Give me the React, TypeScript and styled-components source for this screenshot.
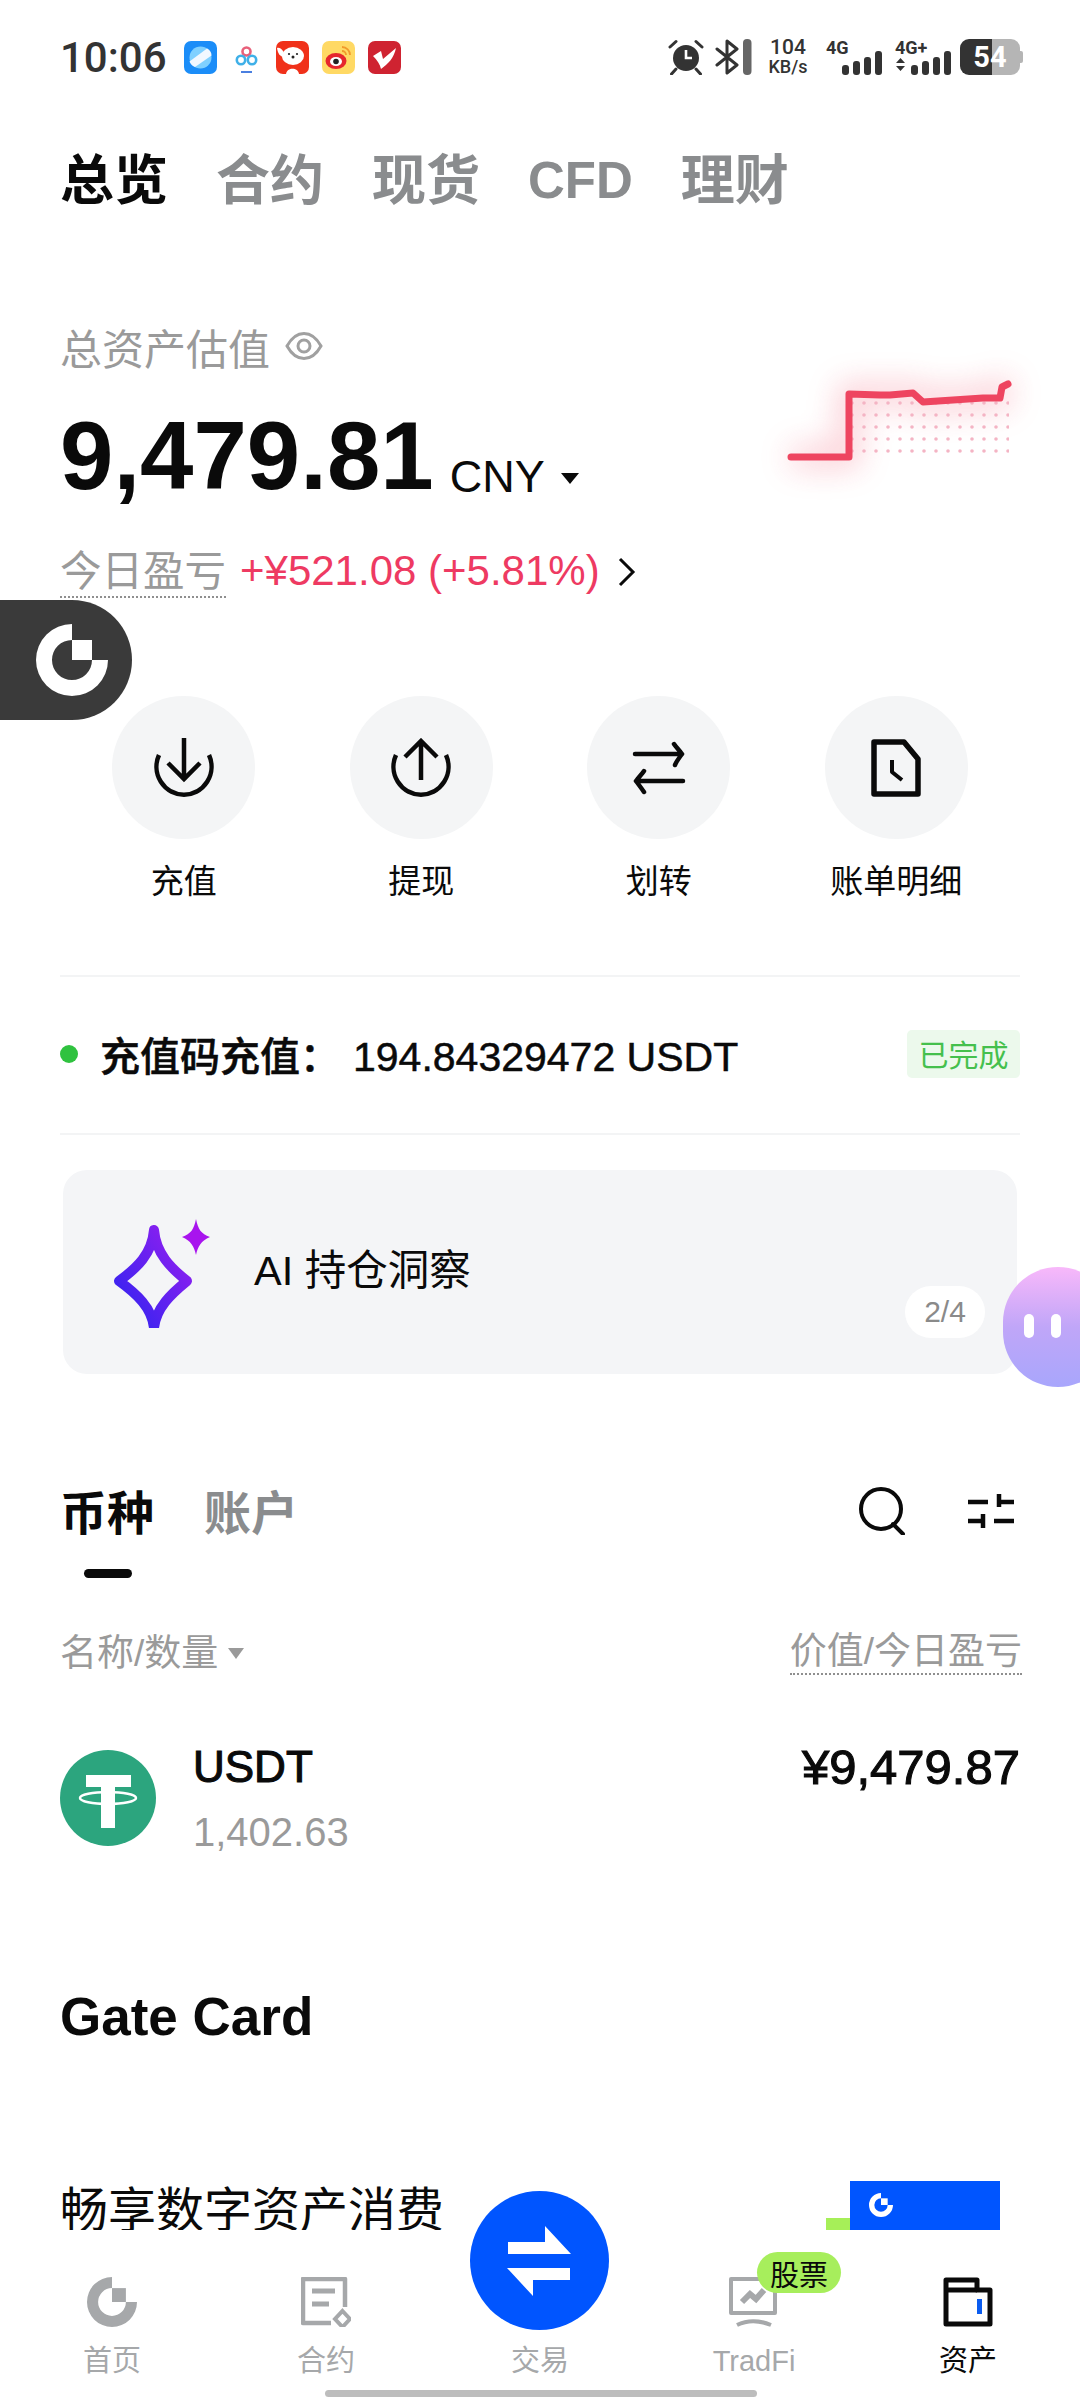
import React from "react";
import styled, { createGlobalStyle } from "styled-components";

const sans = `"Liberation Sans", "Noto Sans CJK SC", sans-serif`;

const GlobalStyle = createGlobalStyle`
  html, body {
    margin: 0;
    padding: 0;
    background: #ffffff;
  }
`;

const Page = styled.div`
  position: relative;
  width: 1080px;
  height: 2400px;
  overflow: hidden;
  background: #ffffff;
  color: #0a0a0a;
  font-family: ${sans};
`;

const Content = styled.div`
  display: flex;
  flex-direction: column;
  padding: 0 60px;
`;

/* status bar */
const StatusBar = styled.div`
  display: flex;
  align-items: center;
  justify-content: space-between;
  height: 114px;
  margin: 0 -60px;
  padding: 0 60px;
`;

const StatusLeft = styled.div`
  display: flex;
  align-items: center;
`;

const Clock = styled.div`
  width: 124px;
  font-family: Roboto, sans-serif;
  font-size: 42px;
  font-weight: 500;
  color: #333333;
`;

const AppIcons = styled.div`
  display: flex;
  gap: 13px;
`;

const StatusRight = styled.div`
  display: flex;
  align-items: center;
`;

const Speed = styled.div`
  display: flex;
  flex-direction: column;
  align-items: center;
  width: 44px;
  margin: 0 16px 0 14px;
  font-family: Roboto, sans-serif;
  font-weight: 500;
  color: #333333;
`;

const SpeedValue = styled.span`
  font-size: 21px;
  line-height: 20px;
`;

const SpeedUnit = styled.span`
  font-size: 18px;
  line-height: 20px;
`;

const Signal = styled.div<{ $gap: number }>`
  position: relative;
  width: 56px;
  height: 36px;
  margin-right: ${(p) => p.$gap}px;
`;

const SignalLabel = styled.span`
  position: absolute;
  left: 0;
  top: 0;
  font-family: Roboto, sans-serif;
  font-size: 18px;
  font-weight: 700;
  line-height: 18px;
  color: #333333;
`;

const Battery = styled.div`
  position: relative;
  display: flex;
  align-items: center;
  justify-content: center;
  width: 60px;
  height: 36px;
  border-radius: 9px;
  background: linear-gradient(90deg, #333333 0 53%, #b5b5b5 53% 100%);
  font-family: Roboto, sans-serif;
  font-size: 29px;
  font-weight: 700;
  color: #ffffff;
  &::after {
    content: "";
    position: absolute;
    right: -3px;
    top: 12px;
    width: 3px;
    height: 12px;
    border-radius: 0 2px 2px 0;
    background: #b5b5b5;
  }
`;

/* top tabs */
const TopTabs = styled.div`
  display: flex;
  gap: 48px;
  height: 60px;
  margin-top: 37px;
  align-items: center;
`;

const TopTab = styled.span<{ $active?: boolean; $latin?: boolean }>`
  font-size: ${(p) => (p.$latin ? 51 : 54)}px;
  font-weight: 700;
  line-height: 60px;
  color: ${(p) => (p.$active ? "#0a0a0a" : "#8a8c8e")};
`;

/* balance */
const BalanceLabel = styled.div`
  display: flex;
  align-items: center;
  gap: 15px;
  height: 50px;
  margin-top: 110px;
  font-size: 42px;
  color: #9a9a9a;
`;

const BalanceRow = styled.div`
  display: flex;
  align-items: baseline;
  height: 100px;
  margin-top: 35px;
`;

const Amount = styled.span`
  font-size: 96px;
  font-weight: 700;
  line-height: 100px;
`;

const Currency = styled.span`
  margin-left: 16px;
  font-size: 45px;
  transform: translateY(3px);
`;

const Caret = styled.span`
  align-self: center;
  width: 0;
  height: 0;
  margin: 44px 0 0 16px;
  border-left: 9px solid transparent;
  border-right: 9px solid transparent;
  border-top: 11px solid #0a0a0a;
`;

const ChartBox = styled.div`
  position: absolute;
  left: 760px;
  top: 350px;
`;

const DailyRow = styled.div`
  display: flex;
  align-items: center;
  height: 50px;
  margin-top: 41px;
`;

const DailyLabel = styled.span`
  height: 50px;
  border-bottom: 2px dotted #8f8f8f;
  font-size: 41.5px;
  line-height: 52px;
  color: #9a9a9a;
`;

const DailyValue = styled.span`
  margin: -2px 0 0 14px;
  font-size: 42px;
  color: #ee3a62;
`;

const DailyArrow = styled.svg`
  margin-left: 17px;
`;

/* floating pills */
const GatePill = styled.div`
  position: absolute;
  left: 0;
  top: 600px;
  display: flex;
  align-items: center;
  padding-left: 36px;
  box-sizing: border-box;
  width: 132px;
  height: 120px;
  border-radius: 0 60px 60px 0;
  background: #3a3a3a;
`;

const BotPill = styled.div`
  position: absolute;
  left: 1003px;
  top: 1267px;
  display: flex;
  align-items: center;
  gap: 17px;
  box-sizing: border-box;
  width: 110px;
  height: 120px;
  padding: 0 0 0 21px;
  border-radius: 60px;
  background: linear-gradient(180deg, #f8b8fa 0%, #c0a6f8 50%, #a8a6fc 100%);
`;

const BotEye = styled.span`
  width: 10px;
  height: 24px;
  margin-top: -2px;
  border-radius: 5px;
  background: #ffffff;
`;

/* actions */
const Actions = styled.div`
  display: grid;
  grid-template-columns: repeat(4, 237.5px);
  margin-top: 99px;
  padding-left: 5px;
`;

const Action = styled.div`
  display: flex;
  flex-direction: column;
  align-items: center;
  gap: 23px;
`;

const ActionCircle = styled.div`
  display: flex;
  align-items: center;
  justify-content: center;
  width: 143px;
  height: 143px;
  border-radius: 50%;
  background: #f4f5f6;
`;

const ActionLabel = styled.span`
  font-size: 33px;
  line-height: 40px;
`;

const Divider = styled.div<{ $top: number }>`
  height: 2px;
  margin-top: ${(p) => p.$top}px;
  background: #f3f4f5;
`;

/* notice */
const Notice = styled.div`
  display: flex;
  align-items: center;
  height: 48px;
  margin-top: 53px;
`;

const NoticeDot = styled.span`
  width: 18px;
  height: 18px;
  border-radius: 50%;
  background: #2fc23f;
`;

const NoticeText = styled.span`
  flex: 1;
  margin-left: 22px;
  font-size: 40px;
  font-weight: 500;
  -webkit-text-stroke: 0.5px #0a0a0a;
`;

const NoticeValue = styled.span`
  margin-left: 13px;
  font-size: 41px;
  font-weight: 400;
`;

const StatusBadge = styled.span`
  display: flex;
  align-items: center;
  justify-content: center;
  width: 113px;
  height: 48px;
  padding-bottom: 2px;
  box-sizing: border-box;
  border-radius: 5px;
  background: #ecf9ec;
  font-size: 30px;
  color: #45c04d;
`;

/* AI card */
const InsightCard = styled.div`
  position: relative;
  display: flex;
  align-items: center;
  height: 204px;
  margin: 35px 3px 0;
  padding-left: 50px;
  border-radius: 24px;
  background: #f4f5f7;
`;

const InsightText = styled.span`
  margin: 0 0 10px 41px;
  font-size: 41.500px;
`;

const Pager = styled.span`
  position: absolute;
  right: 32px;
  bottom: 36px;
  display: flex;
  align-items: center;
  justify-content: center;
  width: 80px;
  height: 52px;
  border-radius: 26px;
  background: #ffffff;
  font-size: 30px;
  color: #8a8a8a;
`;

/* assets */
const AssetTabs = styled.div`
  display: flex;
  align-items: center;
  height: 60px;
  margin-top: 105px;
`;

const AssetTab = styled.span<{ $active?: boolean }>`
  margin-right: 50px;
  font-size: 47px;
  font-weight: 700;
  color: ${(p) => (p.$active ? "#0a0a0a" : "#8a8c8e")};
`;

const AssetTools = styled.div`
  display: flex;
  align-items: center;
  gap: 63px;
  margin: 3px 6px 0 auto;
`;

const TabMarker = styled.div`
  width: 48px;
  height: 9px;
  margin: 30px 0 0 24px;
  border-radius: 5px;
  background: #0a0a0a;
`;

const ListHeader = styled.div`
  display: flex;
  align-items: center;
  height: 46px;
  margin-top: 51px;
  font-size: 37px;
  color: #9a9a9a;
`;

const SmallCaret = styled.span`
  width: 0;
  height: 0;
  margin: 2px 0 0 10px;
  border-left: 8px solid transparent;
  border-right: 8px solid transparent;
  border-top: 11px solid #9a9a9a;
`;

const NameHeader = styled.span`
  margin-top: -4px;
`;

const ValueHeader = styled.span`
  margin: 0 -2px 0 auto;
  border-bottom: 2px dotted #8f8f8f;
  line-height: 43px;
`;

const CoinRow = styled.div`
  display: flex;
  height: 96px;
  margin-top: 75px;
`;

const CoinInfo = styled.div`
  flex: 1;
  display: flex;
  flex-direction: column;
  margin-left: 37px;
`;

const CoinName = styled.span`
  height: 40px;
  font-size: 44px;
  line-height: 34px;
  -webkit-text-stroke: 1.1px #0a0a0a;
`;

const CoinAmount = styled.span`
  margin-top: 26px;
  font-size: 40px;
  line-height: 44px;
  color: #9a9a9a;
`;

const CoinValue = styled.span`
  font-size: 49px;
  line-height: 34px;
  -webkit-text-stroke: 1.1px #0a0a0a;
`;

const SectionTitle = styled.div`
  height: 64px;
  margin-top: 139px;
  font-size: 53px;
  font-weight: 700;
  line-height: 64px;
`;

const Promo = styled.div`
  display: flex;
  align-items: flex-start;
  height: 120px;
  margin-top: 129px;
`;

const PromoText = styled.span`
  flex: 1;
  margin-top: 3px;
  font-size: 48px;
  line-height: 60px;
`;

const PromoLime = styled.div`
  width: 24px;
  height: 60px;
  margin-top: 40px;
  background: #a6ef58;
`;

const PromoCard = styled.div`
  display: flex;
  width: 150px;
  height: 100px;
  margin: 3px 20px 0 0;
  padding: 12px 0 0 19px;
  box-sizing: border-box;
  background: #0055ff;
`;

/* bottom nav */
const BottomNav = styled.nav`
  position: absolute;
  left: 0;
  right: 0;
  bottom: 0;
  display: grid;
  grid-template-columns: repeat(5, 214px);
  box-sizing: border-box;
  height: 170px;
  padding: 47px 5px 0;
  background: #ffffff;
`;

const NavItem = styled.div<{ $active?: boolean }>`
  position: relative;
  display: flex;
  flex-direction: column;
  align-items: center;
  font-size: 29px;
  color: ${(p) => (p.$active ? "#0a0a0a" : "#a6a8aa")};
`;

const NavIconSlot = styled.div`
  height: 50px;
  margin-bottom: 16px;
`;

const NavLabel = styled.span`
  line-height: 36px;
`;

const TradeButton = styled.div`
  position: absolute;
  left: 37px;
  top: -86px;
  display: flex;
  align-items: center;
  justify-content: center;
  width: 139px;
  height: 139px;
  border-radius: 50%;
  background: #0055ff;
`;

const StockBadge = styled.span`
  position: absolute;
  left: 110px;
  top: -25px;
  display: flex;
  align-items: center;
  justify-content: center;
  width: 84px;
  height: 41px;
  border-radius: 21px;
  background: #a7ee5c;
  font-size: 29px;
  color: #0a0a0a;
`;

const HomeBar = styled.div`
  position: absolute;
  left: 325px;
  bottom: 3px;
  width: 432px;
  height: 7px;
  border-radius: 4px;
  background: #bdbdbd;
`;

function GateLogo({ size, color }: { size: number; color: string }) {
  return (
    <svg width={size} height={size} viewBox="-36 -36 72 72">
      <path d="M0 -36A36 36 0 1 0 36 0H20A20 20 0 1 1 0 -20Z" fill={color} />
      <rect x="0" y="-20" width="20" height="20" fill={color} />
    </svg>
  );
}

function AppIconSet() {
  return (
    <AppIcons>
      <svg width="33" height="33" viewBox="0 0 33 33">
        <rect width="33" height="33" rx="7" fill="#1b8df8" />
        <circle cx="16.5" cy="16.5" r="11" fill="#7fd0ff" />
        <path d="M5.5 20.5L23 7.5C26 9 27.5 11.5 27.5 14.5L11 26C8 25 6.5 23 5.5 20.5Z" fill="#f2f8ff" />
      </svg>
      <svg width="33" height="33" viewBox="0 0 33 33">
        <rect width="33" height="33" rx="7" fill="#ffffff" />
        <circle cx="16.5" cy="10.5" r="4" fill="none" stroke="#e8607a" strokeWidth="2.6" />
        <circle cx="11" cy="19" r="4.2" fill="none" stroke="#3fb0e8" strokeWidth="2.6" />
        <circle cx="22" cy="19" r="4.2" fill="none" stroke="#3fb0e8" strokeWidth="2.6" />
        <rect x="11" y="30" width="11" height="2" fill="#4a7fe0" />
      </svg>
      <svg width="33" height="33" viewBox="0 0 33 33">
        <rect width="33" height="33" rx="7" fill="#f0311a" />
        <ellipse cx="17" cy="15" rx="11" ry="9" fill="#ffffff" />
        <path d="M10 33C11 26 22 26 23 33Z" fill="#ffffff" />
        <path d="M1 7C5 6 8 10 8 15C6 17 2 14 1 7Z" fill="#ffffff" />
        <circle cx="13" cy="13" r="1.1" fill="#222" />
        <circle cx="21" cy="13" r="1.1" fill="#222" />
        <circle cx="17" cy="16" r="1.5" fill="#222" />
      </svg>
      <svg width="33" height="33" viewBox="0 0 33 33">
        <rect width="33" height="33" rx="7" fill="#ffd964" />
        <ellipse cx="14" cy="20" rx="10.5" ry="8" fill="#e6262d" />
        <ellipse cx="14" cy="20.5" rx="6" ry="4.6" fill="#ffffff" />
        <circle cx="14" cy="20.5" r="2.8" fill="#222" />
        <path d="M20 6A8 8 0 0 1 28 14M20 10A4 4 0 0 1 24 14" fill="none" stroke="#f19a2a" strokeWidth="1.8" />
      </svg>
      <svg width="33" height="33" viewBox="0 0 33 33">
        <rect width="33" height="33" rx="7" fill="#cf2331" />
        <path d="M5 15L13 10L15 18L28 7C26 17 20 23 13 28C12 23 9 19 5 15Z" fill="#ffffff" />
      </svg>
    </AppIcons>
  );
}

function SignalBars({ arrows }: { arrows?: boolean }) {
  return (
    <svg width="56" height="36" viewBox="0 0 56 36" style={{ display: "block" }}>
      {arrows && <path d="M1 24L5.5 19L10 24ZM1 27L5.5 32L10 27Z" fill="#333333" />}
      <rect x="16" y="26" width="7" height="10" rx="3" fill="#333333" />
      <rect x="27" y="22" width="7" height="14" rx="3" fill="#333333" />
      <rect x="38" y="18" width="7" height="18" rx="3" fill="#333333" />
      <rect x="49" y="12" width="7" height="24" rx="3" fill="#333333" />
    </svg>
  );
}

const BluetoothSvg = styled.svg`
  margin-left: 11px;
`;

function StatusIcons() {
  return (
    <StatusRight>
      <svg width="36" height="36" viewBox="0 0 36 36">
        <circle cx="18" cy="19" r="13" fill="#333333" />
        <path d="M18 11V19H24" fill="none" stroke="#ffffff" strokeWidth="2.6" />
        <path d="M2 8L8 2.5M34 8L28 2.5M8 30L3.5 35M28 30L32.5 35" stroke="#333333" strokeWidth="3" strokeLinecap="round" />
      </svg>
      <BluetoothSvg width="37" height="36" viewBox="0 0 37 36">
        <path d="M2 10L22 26L12 34V2L22 10L2 26" fill="none" stroke="#333333" strokeWidth="3" strokeLinejoin="round" strokeLinecap="round" />
        <rect x="28" y="0" width="8.5" height="36" rx="4" fill="#666666" />
      </BluetoothSvg>
      <Speed>
        <SpeedValue>104</SpeedValue>
        <SpeedUnit>KB/s</SpeedUnit>
      </Speed>
      <Signal $gap={13}>
        <SignalLabel>4G</SignalLabel>
        <SignalBars />
      </Signal>
      <Signal $gap={9}>
        <SignalLabel>4G+</SignalLabel>
        <SignalBars arrows />
      </Signal>
      <Battery>54</Battery>
    </StatusRight>
  );
}

function EyeIcon() {
  return (
    <svg width="38" height="30" viewBox="0 0 38 30">
      <path d="M2 15C7 6 13 2.5 19 2.5S31 6 36 15C31 24 25 27.5 19 27.5S7 24 2 15Z" fill="none" stroke="#a0a0a0" strokeWidth="3" />
      <circle cx="19" cy="15" r="6" fill="none" stroke="#a0a0a0" strokeWidth="3" />
    </svg>
  );
}

function PnlChart() {
  const line = "M31 107H89V44L120 45L130 45L153 43L163 52L223 48L240 48L242 37L248 34";
  return (
    <ChartBox>
      <svg width="300" height="170" viewBox="0 0 300 170">
        <defs>
          <filter id="glow" x="-30%" y="-60%" width="160%" height="220%">
            <feGaussianBlur stdDeviation="16" />
          </filter>
          <pattern id="dots" x="86" y="47" width="12" height="12" patternUnits="userSpaceOnUse">
            <circle cx="6" cy="6" r="1.8" fill="#f4b4c4" />
          </pattern>
        </defs>
        <path d={line} fill="none" stroke="#f3576f" strokeWidth="18" opacity="0.36" filter="url(#glow)" />
        <rect x="86" y="47" width="163" height="60" fill="url(#dots)" />
        <path d={line} fill="none" stroke="#ee4560" strokeWidth="7" strokeLinecap="round" strokeLinejoin="round" />
      </svg>
    </ChartBox>
  );
}

function DownloadIcon() {
  return (
    <svg width="60" height="60" viewBox="0 0 60 60" fill="none" stroke="#0a0a0a" strokeWidth="4.500">
      <path d="M5 17A27.500 28 0 1 0 55 17" />
      <path d="M30 0V40M14 25L30 41L46 25" />
    </svg>
  );
}

function UploadIcon() {
  return (
    <svg width="60" height="60" viewBox="0 0 60 60" fill="none" stroke="#0a0a0a" strokeWidth="4.500">
      <path d="M5 17A27.500 28 0 1 0 55 17" />
      <path d="M30 42V3M14 19L30 3L46 19" />
    </svg>
  );
}

function TransferIcon() {
  return (
    <svg width="54" height="54" viewBox="0 0 54 54" fill="none" stroke="#0a0a0a" strokeWidth="4.500" strokeLinecap="round" strokeLinejoin="round">
      <path d="M3 13H50C47 9 44 6 42 3M50 13C47 17 44 21 43 24" />
      <path d="M51 40H4C7 36 10 33 12 30M4 40C7 44 10 48 12 51" />
    </svg>
  );
}

function RecordIcon() {
  return (
    <svg width="50" height="58" viewBox="0 0 50 58" fill="none" stroke="#0a0a0a" strokeWidth="5.500" strokeLinejoin="round">
      <path d="M3 3H33L47 20V55H3Z" />
      <path d="M21 21V33L31 41" strokeWidth="4" />
    </svg>
  );
}

function SparkIcon() {
  return (
    <svg width="100" height="112" viewBox="0 0 100 112">
      <defs>
        <linearGradient id="spark" x1="0" y1="1" x2="1" y2="0">
          <stop offset="0" stopColor="#2a24f0" />
          <stop offset="1" stopColor="#9a1ff0" />
        </linearGradient>
      </defs>
      <path d="M41 14C39 38 24 52 6 65C24 78 39 92 41 112C43 92 58 78 74 65C58 52 43 38 41 14Z" fill="none" stroke="url(#spark)" strokeWidth="10" strokeLinejoin="round" />
      <path d="M83 3C85 13 88 18 97 21C88 25 85 30 83 39C81 30 78 25 69 21C78 18 81 13 83 3Z" fill="#a814ee" />
    </svg>
  );
}

function SearchIcon() {
  return (
    <svg width="46" height="48" viewBox="0 0 46 48" fill="none" stroke="#0a0a0a" strokeWidth="4">
      <circle cx="22" cy="22" r="20" />
      <path d="M34 37L44 47" strokeLinecap="round" />
    </svg>
  );
}

function SlidersIcon() {
  return (
    <svg width="46" height="36" viewBox="0 0 46 36" fill="none" stroke="#0a0a0a" strokeWidth="4.500">
      <path d="M0 9H20M31 9H46M31 1V14" />
      <path d="M0 28H15M26 28H46M15 21V35" />
    </svg>
  );
}

function TetherIcon() {
  return (
    <svg width="96" height="96" viewBox="0 0 96 96">
      <circle cx="48" cy="48" r="48" fill="#2ca57e" />
      <path d="M26 25H71V37H55V78H41V37H26Z" fill="#ffffff" />
      <ellipse cx="48" cy="48" rx="28" ry="6" fill="none" stroke="#ffffff" strokeWidth="2.500" />
    </svg>
  );
}

function ContractIcon() {
  return (
    <svg width="50" height="50" viewBox="0 0 50 50" fill="none">
      <path d="M30 46H2V2H44V30" stroke="#a6a8aa" strokeWidth="4.500" strokeLinejoin="round" />
      <path d="M11 14H34M11 27H28" stroke="#a6a8aa" strokeWidth="5" />
      <path d="M41.500 34L49 42L41.500 50L34 42Z" stroke="#a6a8aa" strokeWidth="4" />
    </svg>
  );
}

function TradFiIcon() {
  return (
    <svg width="50" height="50" viewBox="0 0 50 50" fill="none" stroke="#a6a8aa">
      <path d="M2 36V2H46V36Z" strokeWidth="4" strokeLinejoin="round" />
      <path d="M13 25L21 17L27 22L35 13" strokeWidth="6" />
      <path d="M8 48C18 43 30 43 42 48" strokeWidth="4" />
    </svg>
  );
}

function WalletIcon() {
  return (
    <svg width="50" height="50" viewBox="0 0 50 50" fill="none">
      <path d="M3 47V3H34V13H47V47Z" stroke="#0a0a0a" strokeWidth="5" strokeLinejoin="round" />
      <path d="M3 13H34" stroke="#0a0a0a" strokeWidth="5" />
      <rect x="34" y="22" width="5" height="15" fill="#0a5cf0" />
    </svg>
  );
}

function TradeIcon() {
  return (
    <svg width="66" height="70" viewBox="0 0 66 70" fill="#ffffff">
      <path d="M38 0L64 28H1V16H38Z" />
      <path d="M26 70L0 42H63V54H26Z" />
    </svg>
  );
}

function App() {
  return (
    <Page>
      <GlobalStyle />
      <Content>
        <StatusBar>
          <StatusLeft>
            <Clock>10:06</Clock>
            <AppIconSet />
          </StatusLeft>
          <StatusIcons />
        </StatusBar>

        <TopTabs>
          <TopTab $active>总览</TopTab>
          <TopTab>合约</TopTab>
          <TopTab>现货</TopTab>
          <TopTab $latin>CFD</TopTab>
          <TopTab>理财</TopTab>
        </TopTabs>

        <BalanceLabel>
          总资产估值
          <EyeIcon />
        </BalanceLabel>
        <BalanceRow>
          <Amount>9,479.81</Amount>
          <Currency>CNY</Currency>
          <Caret />
        </BalanceRow>
        <DailyRow>
          <DailyLabel>今日盈亏</DailyLabel>
          <DailyValue>+¥521.08 (+5.81%)</DailyValue>
          <DailyArrow width="20" height="30" viewBox="0 0 20 30" fill="none" stroke="#0a0a0a" strokeWidth="3">
            <path d="M3 2L16 15L3 28" />
          </DailyArrow>
        </DailyRow>

        <Actions>
          <Action>
            <ActionCircle><DownloadIcon /></ActionCircle>
            <ActionLabel>充值</ActionLabel>
          </Action>
          <Action>
            <ActionCircle><UploadIcon /></ActionCircle>
            <ActionLabel>提现</ActionLabel>
          </Action>
          <Action>
            <ActionCircle><TransferIcon /></ActionCircle>
            <ActionLabel>划转</ActionLabel>
          </Action>
          <Action>
            <ActionCircle><RecordIcon /></ActionCircle>
            <ActionLabel>账单明细</ActionLabel>
          </Action>
        </Actions>

        <Divider $top={73} />
        <Notice>
          <NoticeDot />
          <NoticeText>
            充值码充值：<NoticeValue>194.84329472 USDT</NoticeValue>
          </NoticeText>
          <StatusBadge>已完成</StatusBadge>
        </Notice>
        <Divider $top={55} />

        <InsightCard>
          <SparkIcon />
          <InsightText>AI 持仓洞察</InsightText>
          <Pager>2/4</Pager>
        </InsightCard>

        <AssetTabs>
          <AssetTab $active>币种</AssetTab>
          <AssetTab>账户</AssetTab>
          <AssetTools>
            <SearchIcon />
            <SlidersIcon />
          </AssetTools>
        </AssetTabs>
        <TabMarker />

        <ListHeader>
          <NameHeader>名称/数量</NameHeader>
          <SmallCaret />
          <ValueHeader>价值/今日盈亏</ValueHeader>
        </ListHeader>

        <CoinRow>
          <TetherIcon />
          <CoinInfo>
            <CoinName>USDT</CoinName>
            <CoinAmount>1,402.63</CoinAmount>
          </CoinInfo>
          <CoinValue>¥9,479.87</CoinValue>
        </CoinRow>

        <SectionTitle>Gate Card</SectionTitle>
        <Promo>
          <PromoText>畅享数字资产消费</PromoText>
          <PromoLime />
          <PromoCard>
            <GateLogo size={24} color="#ffffff" />
          </PromoCard>
        </Promo>
      </Content>

      <PnlChart />

      <GatePill>
        <GateLogo size={72} color="#ffffff" />
      </GatePill>
      <BotPill>
        <BotEye />
        <BotEye />
      </BotPill>

      <BottomNav>
        <NavItem>
          <NavIconSlot><GateLogo size={50} color="#a6a8aa" /></NavIconSlot>
          <NavLabel>首页</NavLabel>
        </NavItem>
        <NavItem>
          <NavIconSlot><ContractIcon /></NavIconSlot>
          <NavLabel>合约</NavLabel>
        </NavItem>
        <NavItem>
          <TradeButton><TradeIcon /></TradeButton>
          <NavIconSlot />
          <NavLabel>交易</NavLabel>
        </NavItem>
        <NavItem>
          <NavIconSlot><TradFiIcon /></NavIconSlot>
          <StockBadge>股票</StockBadge>
          <NavLabel>TradFi</NavLabel>
        </NavItem>
        <NavItem $active>
          <NavIconSlot><WalletIcon /></NavIconSlot>
          <NavLabel>资产</NavLabel>
        </NavItem>
      </BottomNav>
      <HomeBar />
    </Page>
  );
}

export default App;
